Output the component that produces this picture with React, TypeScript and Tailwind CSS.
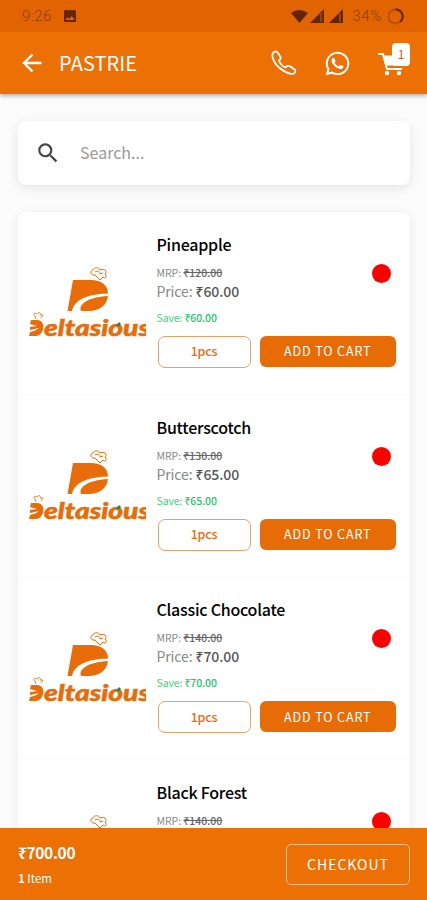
import { MdImage, MdSearch } from "react-icons/md";
import { FaWhatsapp } from "react-icons/fa";

const products = [
  { name: "Pineapple", mrp: "₹120.00", price: "₹60.00" },
  { name: "Butterscotch", mrp: "₹130.00", price: "₹65.00" },
  { name: "Classic Chocolate", mrp: "₹140.00", price: "₹70.00" },
  { name: "Black Forest", mrp: "₹140.00", price: "₹70.00" },
];

function Logo() {
  return (
    <svg className="block h-[76px] w-[117px]" viewBox="0 0 117 76">
      <g fill="#e86c08">
        <path d="M44 14H62C72 14 79 19 79 27.500C64 28 46 31 43 45H38.500Z" />
        <path d="M79 30C78 40 69 45 60 45H52C49 39 58 31 79 30Z" />
        <path d="M2 54H8C18 54 15 70 7 70H0L1 66C5 65 8 64 10 62L1 64V61L8 60L1 58Z" />
      </g>
      <g fill="none" stroke="#e86c08" strokeWidth="1" strokeLinejoin="round">
        <path d="M68 11L66 9C62 10 60 5 64 4C65 1 70 1 71 4C75 2 79 5 76 8C79 11 76 13 74 11L71 14Z" />
        <path d="M66 6C69 4 71 6 71 8L74 7" />
        <path d="M7 53L6 50C3 49 6 46 8 48C10 45 12 47 11 49L14 49L12 52" strokeWidth=".8" />
      </g>
      <text x="15" y="70" textLength="106" lengthAdjust="spacingAndGlyphs" fontFamily="Lato, sans-serif" fontSize="22.5" fontStyle="italic" fontWeight="900" fill="#e86c08" stroke="#e86c08" strokeWidth=".5">eltasious</text>
      <path d="M87 60L90 56L92 58L90.500 60Z" fill="#168c46" />
    </svg>
  );
}

function StatusBar() {
  return (
    <div className="flex h-8 items-center bg-[#e26400] pl-[22px] pr-[23px] text-[#8a3d00]">
      <span className="font-[Roboto] text-[15px] font-light tracking-[0.4px]">9:26</span>
      <MdImage className="ml-[10px] text-[16px] text-[#652600]" />
      <svg className="ml-auto h-4 w-[54px]" viewBox="0 0 54 16" fill="#622500">
        <path d="M0 5Q8-1 17 5L8.500 15Z" />
        <path d="M19 15L33 1V15Z" /><path d="M38 15L52 1V15Z" />
        <path d="M30 5V14M49 5V14" stroke="#d76008" />
      </svg>
      <span className="ml-[7px] font-[Roboto] text-[15px] font-light tracking-[0.7px]">34%</span>
      <svg className="ml-[5px] h-[17px] w-[17px]" viewBox="0 0 17 17" fill="none" strokeWidth="2">
        <circle cx="8.500" cy="8.500" r="7" stroke="#b95009" />
        <path d="M8.500 1.500A7 7 0 0 1 13 14" stroke="#652600" />
      </svg>
    </div>
  );
}

function Header() {
  return (
    <header className="relative z-10 shadow-[0_2px_4px_rgba(0,0,0,0.3)]">
      <StatusBar />
      <div className="flex h-[62px] items-center bg-[#ec7004] pl-[22px] text-white">
        <svg className="h-5 w-5" viewBox="0 0 20 20" fill="none" stroke="white" strokeWidth="2.400">
          <path d="M19.500 10H2M10.500 1.500L2 10L10.500 18.500" />
        </svg>
        <h1 className="ml-[17px] text-[20px] leading-none tracking-[0.1px]">PASTRIE</h1>
        <svg className="ml-auto h-[26px] w-[26px]" viewBox="0 0 26 26" fill="none" stroke="white" strokeWidth="1.800" strokeLinejoin="round">
          <path d="M2 3C3 1 6 1 7 3L9.500 7C10 8.500 9.500 9.500 8 10.500C9 13.500 12 16.500 14.500 17.500C15.500 16 17 15.500 18.500 16L23 19C25 20 24.500 22 23 23.500C19 25 12 21 8 17.500C3.500 13.500 0 6.500 2 3Z" />
        </svg>
        <FaWhatsapp className="ml-[27px] text-[27px]" />
        <div className="relative ml-[27px] mr-[17px] h-7 w-8">
          <svg className="h-7 w-8" viewBox="0 0 32 28" fill="none" stroke="white">
            <path d="M0 5H5L9 20H24" strokeWidth="2" />
            <path d="M5 7H24L23 16H8Z" fill="white" />
            <path d="M9 20H24" strokeWidth="2" />
            <circle cx="9" cy="24" r="2.200" fill="white" stroke="none" /><circle cx="21" cy="24" r="2.200" fill="white" stroke="none" />
          </svg>
          <span className="absolute -top-[6px] left-[14px] flex h-[23px] w-[18px] items-center justify-center rounded-[4px] bg-white pb-[2px] text-[12px] text-[#c66021]">1</span>
        </div>
      </div>
    </header>
  );
}

function Product({ name, mrp, price }: { name: string; mrp: string; price: string }) {
  return (
    <article className="flex h-[182.7px] border-b border-[#fcfcfc] pl-[11px] pr-[14px] pt-[20px]">
      <div className="w-[127.5px] shrink-0 pt-[34px]"><Logo /></div>
      <div className="min-w-0 flex-1">
        <h2 className="h-[26px] text-[16px] font-medium leading-[25px] tracking-[-0.25px] text-black">{name}</h2>
        <div className="flex justify-between pr-[5px]">
          <div className="pt-[6px] text-[#888]">
            <p className="h-[17px] text-[10.5px] leading-[17px] tracking-[-0.05px]">MRP: <span className="font-medium text-[#666] line-through">{mrp}</span></p>
            <p className="h-[21px] text-[14px] leading-[21px] tracking-[-0.1px]">Price: <span className="font-medium text-[#555]">{price}</span></p>
            <p className="mt-[7px] h-[17px] text-[10.5px] leading-[17px] tracking-[-0.12px] text-[#48ce80]">Save: <span className="font-medium text-[#25c268]">{price}</span></p>
          </div>
          <span className="mt-[6px] h-[19px] w-[19px] rounded-full bg-[#ff0000]" />
        </div>
        <div className="mt-[10px] flex gap-[9px] pl-px">
          <button className="h-[32px] w-[93px] rounded-[7px] border border-[#e4a36c] pb-px text-[12.5px] font-medium tracking-[-0.2px] text-[#e56d10]">1pcs</button>
          <button className="h-[31px] flex-1 rounded-[6px] bg-[#e86c06] text-[12.5px] tracking-[0.9px] text-white">ADD TO CART</button>
        </div>
      </div>
    </article>
  );
}

export default function App() {
  return (
    <div className="flex h-[900px] w-[427px] flex-col overflow-hidden bg-[#fcfcfc] font-['Noto_Sans_CJK_SC','Noto_Sans',sans-serif]">
      <Header />
      <main className="min-h-0 flex-1 overflow-hidden pl-[18px] pr-[17px] pt-[27px]">
        <div className="flex h-16 items-center rounded-[8px] bg-white pl-[17px] text-[#999] shadow-[0_3px_12px_rgba(0,0,0,0.1)]">
          <MdSearch className="text-[26px] text-[#444]" />
          <span className="ml-[19px] pb-[2px] text-[16px]">Search...</span>
        </div>
        <section className="mt-[27px] h-[740px] rounded-t-[8px] bg-white shadow-[0_2px_12px_rgba(0,0,0,0.08)]">
          {products.map((product) => <Product key={product.name} {...product} />)}
        </section>
      </main>
      <footer className="relative z-10 flex h-[72px] shrink-0 items-center justify-between bg-[#ec7004] pl-[18px] pr-[17px] text-white">
        <div>
          <p className="h-[27px] text-[15.5px] font-bold leading-[26px] tracking-[-0.35px]">₹700.00</p>
          <p className="h-[24px] text-[11.5px] leading-[24px]"><b>1</b> Item</p>
        </div>
        <button className="h-[41px] w-[124px] rounded-[5px] border-[1.5px] border-[#f9bf89] text-[14px] tracking-[1px]">CHECKOUT</button>
      </footer>
    </div>
  );
}
